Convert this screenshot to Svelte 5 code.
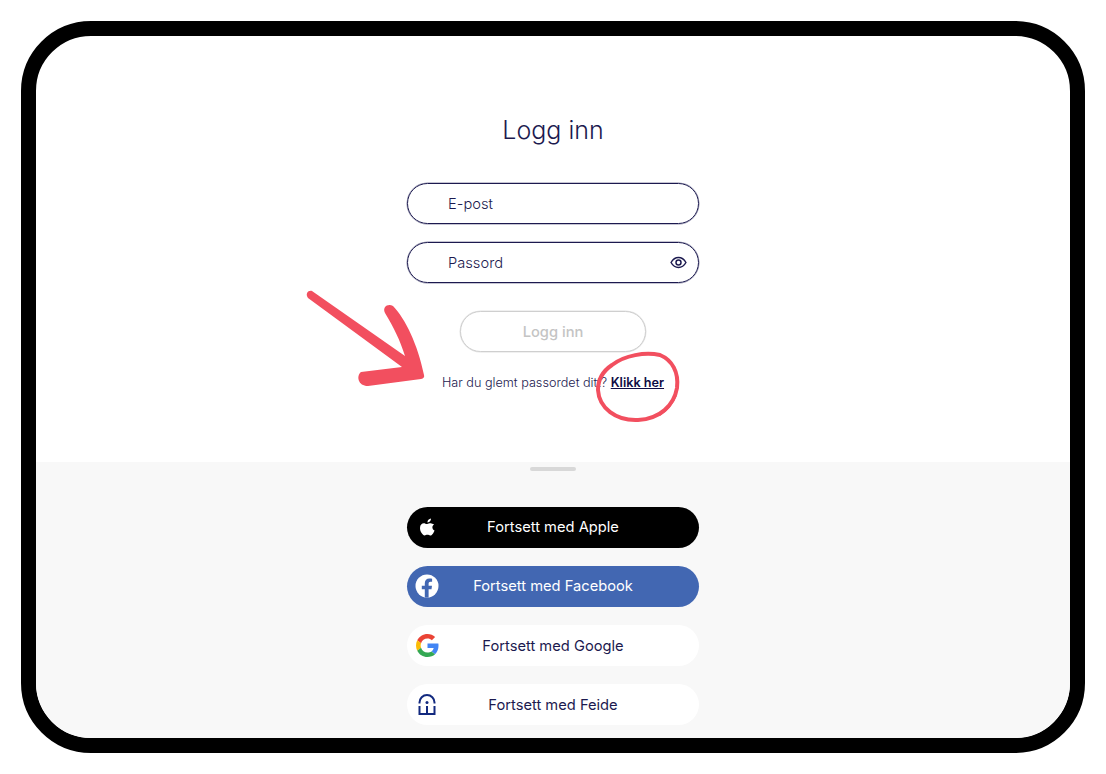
<script lang="ts">
    const providers = [
        { name: "Apple", cls: "apple" },
        { name: "Facebook", cls: "facebook" },
        { name: "Google", cls: "google" },
        { name: "Feide", cls: "feide" },
    ];
</script>

<div class="page">
    <div class="device">
        <section class="login">
            <h1>Logg inn</h1>
            <div class="field"><span>E-post</span></div>
            <div class="field">
                <span>Passord</span>
                <svg class="eye" viewBox="0 0 18 14" width="17" height="13" fill="none" stroke="#1c1a4f" stroke-width="1.6">
                    <path d="M1 7c2-3.600 4.800-5.400 8-5.400S15 3.400 17 7c-2 3.600-4.800 5.400-8 5.400S3 10.600 1 7z" />
                    <circle cx="9" cy="7" r="2.700" />
                </svg>
            </div>
            <button class="submit">Logg inn</button>
            <p class="forgot">Har du glemt passordet ditt? <a href="#klikk">Klikk her</a></p>
        </section>

        <section class="social">
            <div class="handle"></div>
            {#each providers as p}
                <button class="provider {p.cls}">
                    <span class="icon">
                        {#if p.cls === "apple"}
                            <svg viewBox="0 0 16 18" width="15" height="18" fill="#fff">
                                <path d="M11.700 0c.1 1.100-.3 2.100-1 2.900-.7.8-1.700 1.300-2.700 1.200-.1-1 .4-2.100 1-2.800C9.700.600 10.800.100 11.700 0z" />
                                <path d="M15 6.200c-1.100.7-1.800 1.800-1.800 3.100 0 1.500.9 2.800 2.300 3.400-.4 1.100-.9 2.100-1.600 3.100-.9 1.300-1.800 2.300-3 2.300-1.200 0-1.600-.7-3-.7s-1.900.7-3 .7c-1.200 0-2.100-1.100-3-2.400C.6 13.900 0 11.900 0 10c0-3.200 2.100-4.900 4.100-4.900 1.200 0 2.200.8 3 .8.7 0 1.900-.9 3.200-.9 1.900 0 3.500.7 4.700 1.200z" />
                            </svg>
                        {:else if p.cls === "facebook"}
                            <svg viewBox="0 0 24 24" width="24" height="24">
                                <circle cx="12" cy="12" r="11.500" fill="#fff" />
                                <path fill="#4267b2" d="M13.600 23.400v-8.200h2.900l.5-3.400h-3.400V9.600c0-1 .5-1.900 2-1.900h1.500V4.800s-1.400-.2-2.700-.2c-2.800 0-4.600 1.700-4.600 4.700v2.500H6.800v3.400h3v8.200c.7.100 1.300.1 2.200.1.600 0 1.100 0 1.600-.1z" />
                            </svg>
                        {:else if p.cls === "google"}
                            <svg viewBox="0 0 48 48" width="23" height="23">
                                <path fill="#ea4335" d="M24 9.500c3.500 0 6.700 1.300 9.100 3.500l6.800-6.800C35.800 2.400 30.200 0 24 0 14.600 0 6.500 5.400 2.600 13.200l7.900 6.200C12.400 13.600 17.700 9.500 24 9.500z" />
                                <path fill="#4285f4" d="M47 24.500c0-1.600-.1-3.100-.4-4.500H24v9h12.900c-.6 3-2.200 5.500-4.700 7.200l7.600 5.900C44.300 37.900 47 31.800 47 24.500z" />
                                <path fill="#fbbc05" d="M10.500 28.600c-.5-1.400-.8-3-.8-4.600s.3-3.200.8-4.600l-7.900-6.200C.9 16.500 0 20.100 0 24s.9 7.500 2.600 10.800l7.900-6.200z" />
                                <path fill="#34a853" d="M24 48c6.500 0 11.900-2.100 15.800-5.800l-7.600-5.900c-2.100 1.400-4.900 2.300-8.200 2.300-6.300 0-11.600-4.200-13.500-9.900l-7.900 6.100C6.500 42.600 14.600 48 24 48z" />
                            </svg>
                        {:else}
                            <svg viewBox="0 0 18 21" width="18" height="21" fill="none" stroke="#12297f" stroke-width="2">
                                <path d="M1.500 9.500V8.500a7.500 7.500 0 0 1 15 0v1" />
                                <path d="M1.500 12v8M16.500 12v8M0.500 20h17" />
                                <path d="M9 12v8" />
                                <circle cx="9" cy="8.500" r="1.500" fill="#12297f" stroke="none" />
                            </svg>
                        {/if}
                    </span>
                    Fortsett med {p.name}
                </button>
            {/each}
        </section>

        <svg class="marks" viewBox="0 0 1106 774" width="1106" height="774" fill="none" stroke="#f24f5f" stroke-linecap="round" stroke-linejoin="round">
            <path fill="#f24f5f" stroke="none" d="M312 291 L405 356 C400 340 394 328 385 313 C382 307 388 303 393 306 C405 318 418 345 424 375 Q425 378 421 379 L368 386 C358 386 356 376 361 372 L402 367 L308 298 C305 294 308 290 312 291 Z" />
            <path d="M612 365 C625 355 645 352 660 355 C672 360 679 372 677 388 C674 405 660 419 638 420 C616 421 599 408 598 390 C598 379 603 371 612 365" stroke-width="4" />
            <path d="M676 396 C672 405 667 411 660 415" stroke-width="1.500" />
        </svg>
    </div>
</div>

<style>
    :global(body) {
        margin: 0;
        background: #fff;
    }

    .page {
        width: 1106px;
        height: 774px;
        box-sizing: border-box;
        padding: 21px;
        font-family: "Inter", "Noto Sans", sans-serif;
        color: #1c1a4f;
    }

    .device {
        height: 732px;
        box-sizing: border-box;
        border: 15px solid #000;
        border-radius: 70px;
        overflow: hidden;
        display: flex;
        flex-direction: column;
    }

    .login {
        height: 426px;
        flex: none;
        box-sizing: border-box;
        padding-top: 77px;
        display: flex;
        flex-direction: column;
        align-items: center;
    }

    h1 {
        margin: 0 0 35px;
        font-size: 25px;
        line-height: 35px;
        font-weight: 300;
    }

    .field {
        width: 292px;
        height: 41px;
        box-sizing: border-box;
        border: 1px solid #1c1a4f;
        box-shadow: 0 0 0 0.5px rgba(28, 26, 79, 0.5);
        border-radius: 21px;
        padding: 0 11px 0 40px;
        margin-bottom: 18px;
        display: flex;
        align-items: center;
        justify-content: space-between;
        font-size: 14.700px;
        font-weight: 300;
    }

    .submit {
        width: 186px;
        height: 41px;
        margin-top: 10px;
        border: 1px solid #cfcfcf;
        box-shadow: 0 0 0 0.5px rgba(207, 207, 207, 0.6);
        border-radius: 21px;
        background: #fff;
        color: #c4c4c4;
        font: 500 14.700px "Inter", sans-serif;
    }

    .forgot {
        margin: 23px 0 0;
        font-size: 12.650px;
        line-height: 16px;
        font-weight: 300;
    }

    .forgot a {
        color: #0f0d45;
        font-weight: 600;
    }

    .social {
        flex: 1;
        background: #f8f8f8;
        padding-top: 5px;
        display: flex;
        flex-direction: column;
        align-items: center;
        gap: 18.250px;
    }

    .handle {
        width: 46px;
        height: 4px;
        border-radius: 2px;
        background: #d8d8d8;
        margin-bottom: 17.250px;
    }

    .provider {
        position: relative;
        width: 292px;
        height: 41px;
        flex: none;
        border: none;
        border-radius: 21px;
        background: #fff;
        color: #1c1a4f;
        font: 400 14.700px "Inter", sans-serif;
    }

    .apple {
        background: #000;
        color: #fff;
    }

    .facebook {
        background: #4267b2;
        color: #fff;
    }

    .icon {
        position: absolute;
        left: 8px;
        top: 0;
        bottom: 0;
        width: 24px;
        display: flex;
        align-items: center;
        justify-content: center;
    }

    .marks {
        position: absolute;
        left: 0;
        top: 0;
        pointer-events: none;
    }
</style>
